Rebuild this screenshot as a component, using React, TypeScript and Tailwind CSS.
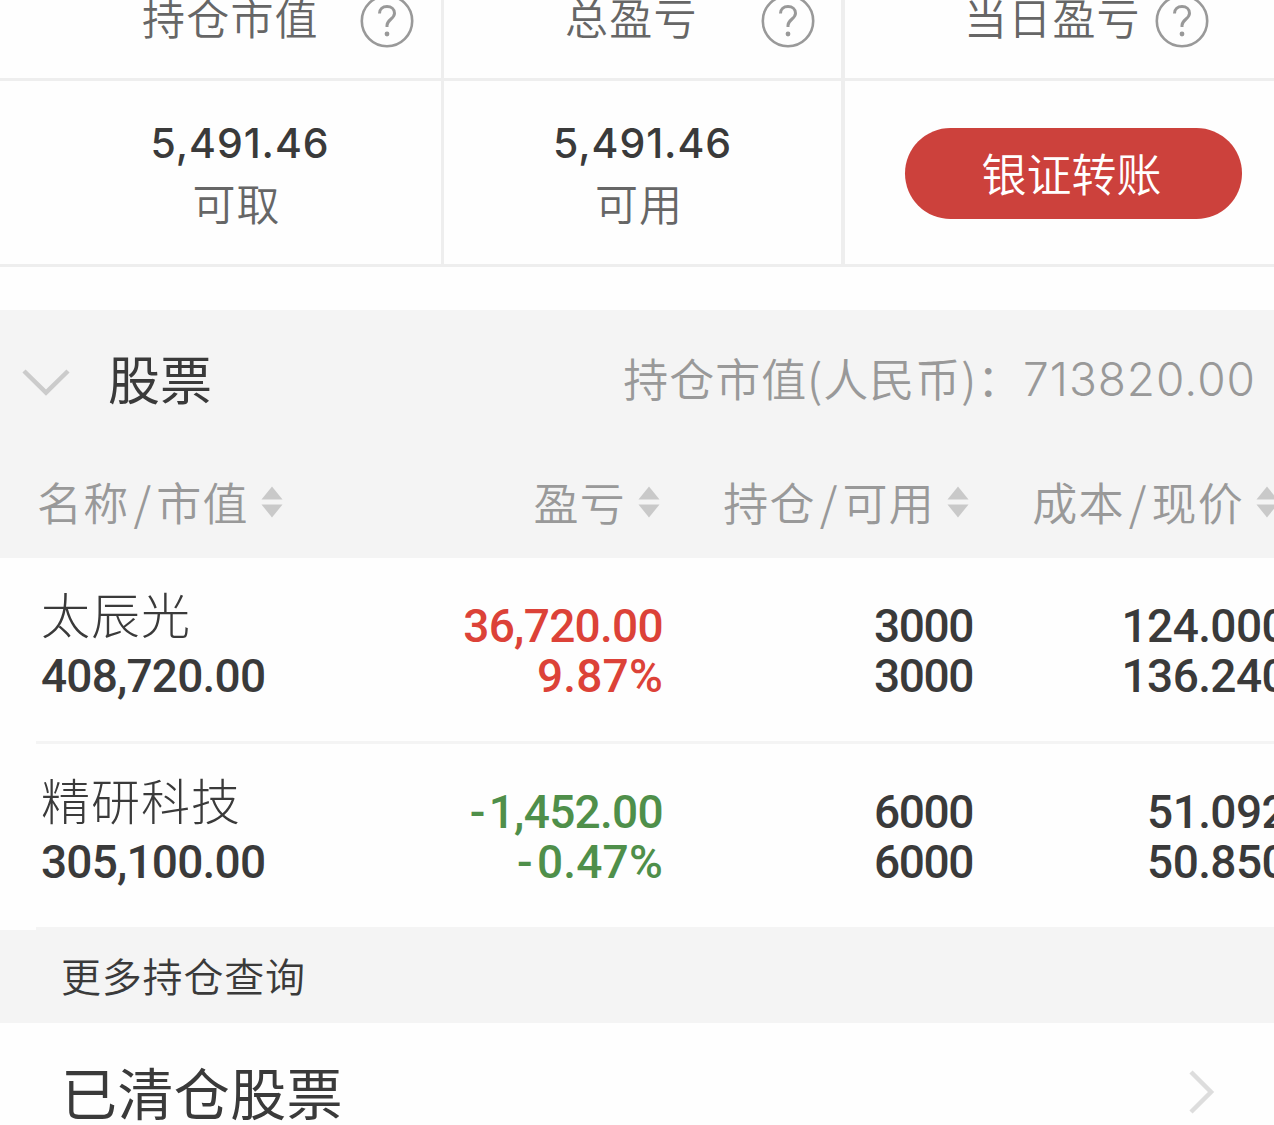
import clsx from "clsx";

const holdings = [
  {
    name: "太辰光",
    value: "408,720.00",
    profit: "36,720.00",
    rate: "9.87%",
    up: true,
    amount: "3000",
    available: "3000",
    cost: "124.000",
    price: "136.240",
  },
  {
    name: "精研科技",
    value: "305,100.00",
    profit: "-1,452.00",
    rate: "-0.47%",
    up: false,
    amount: "6000",
    available: "6000",
    cost: "51.092",
    price: "50.850",
  },
];

function HelpIcon({ className }: { className?: string }) {
  return (
    <svg className={clsx("h-[54px] w-[54px] shrink-0", className)} viewBox="0 0 54 54" fill="none" stroke="#999999">
      <circle cx="27" cy="27" r="25.2" strokeWidth="2.6" />
      <path d="M19.5 19.5c0-4.3 3.2-7 7.5-7s7.5 2.8 7.5 6.7c0 5.8-7.5 6.3-7.5 12.3v1.5" strokeWidth="3" />
      <circle cx="27" cy="40" r="2.4" fill="#999999" stroke="none" />
    </svg>
  );
}

function SortIcon({ className }: { className?: string }) {
  return (
    <svg className={clsx("h-[32px] w-[22px] shrink-0", className)} viewBox="0 0 22 32" fill="#c9c9c9">
      <path d="M11 0.5L21.5 13.5H0.5z" />
      <path d="M11 31.5L21.5 18.5H0.5z" />
    </svg>
  );
}

function ColumnLabel({ first, second }: { first: string; second?: string }) {
  return (
    <div className="flex h-[60px] items-center text-[45px] leading-[60px] font-[350] tracking-[1.2px] whitespace-nowrap text-[#999999]">
      <span>{first}</span>
      {second && (
        <>
          <span className="mx-[4px]">/</span>
          <span>{second}</span>
        </>
      )}
      <SortIcon className="ml-[12px]" />
    </div>
  );
}

function Balance({ amount, label }: { amount: string; label: string }) {
  return (
    <div className="flex flex-col items-center pt-[32px]">
      <span className="font-['Inter'] text-[41px] leading-[60px] font-[450] tracking-[0.9px] text-[#3a3a3a]">{amount}</span>
      <span className="mr-[7px] -mt-[3px] text-[43px] leading-[64px] font-[350] tracking-[1px] text-[#666666]">{label}</span>
    </div>
  );
}

function Figures({ top, bottom, className }: { top: string; bottom: string; className?: string }) {
  return (
    <div className={clsx("flex flex-col items-end pt-[43px] font-['Roboto'] text-[46px] leading-[50px] font-medium", className)}>
      {[top, bottom].map((text, i) => (
        <span key={i} className={clsx(text.endsWith("%") && "tracking-[0.2px]")}>
          {text.startsWith("-") && <span className="mr-[4px]">-</span>}
          {text.replace("-", "")}
        </span>
      ))}
    </div>
  );
}

export default function App() {
  return (
    <div className="h-[1125px] w-[1274px] overflow-hidden bg-[#fefefe] font-['Noto_Sans_CJK_SC',sans-serif] text-[#3a3a3a]">
      {/* Account summary */}
      <div className="grid grid-cols-[444px_401px_429px] border-b-[3px] border-[#eeeeee] text-[43px] font-[350] text-[#666666]">
        <div className="flex h-[81px] justify-between border-r-[3px] border-b-[3px] border-[#eeeeee] pr-[27px] pl-[142px]">
          <span className="-mt-[14px] leading-[60px] tracking-[1.2px]">持仓市值</span>
          <HelpIcon className="-mt-[6px]" />
        </div>
        <div className="flex h-[81px] justify-between border-r-4 border-b-[3px] border-[#eeeeee] pr-[26px] pl-[121px]">
          <span className="-mt-[14px] leading-[60px] tracking-[1.2px]">总盈亏</span>
          <HelpIcon className="-mt-[6px]" />
        </div>
        <div className="flex h-[81px] border-b-[3px] border-[#eeeeee] pl-[119px]">
          <span className="-mt-[14px] leading-[60px] tracking-[1.2px]">当日盈亏</span>
          <HelpIcon className="-mt-[6px] ml-[14px]" />
        </div>
        <div className="h-[183px] border-r-[3px] border-[#eeeeee] pl-[39px]">
          <Balance amount="5,491.46" label="可取" />
        </div>
        <div className="h-[183px] border-r-4 border-[#eeeeee]">
          <Balance amount="5,491.46" label="可用" />
        </div>
        <div className="h-[183px] pt-[47px] pl-[60px]">
          <button className="block h-[91px] w-[337px] rounded-full bg-[#cc413c] pr-[4px] pb-[2px] text-[45px] font-[350] text-white">
            银证转账
          </button>
        </div>
      </div>

      {/* Stock section header */}
      <div className="mt-[43px] h-[248px] bg-[#f4f4f4]">
        <div className="flex h-[140px] items-center pr-[18px] pl-[22px]">
          <svg className="mt-[3px] h-[28px] w-[48px]" viewBox="0 0 48 28" fill="none" stroke="#cbcbcb" strokeWidth="4.5">
            <path d="M2 3l22 21.5L46 3" />
          </svg>
          <span className="ml-[38px] pb-[5px] text-[52px] leading-[70px]">股票</span>
          <div className="ml-auto flex items-center whitespace-nowrap text-[#999999]">
            <span className="pb-[5px] text-[45px] leading-[60px] font-[350] tracking-[1px]">持仓市值(人民币)：</span>
            <span className="-mt-[3px] font-['Inter'] text-[46px] leading-[60px] font-[350] tracking-[1px]">713820.00</span>
          </div>
        </div>
        <div className="grid w-[1278px] grid-cols-[282px_378px_309px_309px] pt-[22px]">
          <div className="pl-[37px]">
            <ColumnLabel first="名称" second="市值" />
          </div>
          <div className="flex justify-end">
            <ColumnLabel first="盈亏" />
          </div>
          <div className="flex justify-end">
            <ColumnLabel first="持仓" second="可用" />
          </div>
          <div className="flex justify-end">
            <ColumnLabel first="成本" second="现价" />
          </div>
        </div>
      </div>

      {holdings.map((item) => (
        <div key={item.name} className="ml-[36px] h-[186px] border-b-[3px] border-[#f4f4f4]">
          <div className="grid w-[1250px] grid-cols-[326px_301px_311px_313px]">
            <div className="flex flex-col pt-[20px] pl-[5px]">
              <span className="text-[49px] leading-[70px] font-light tracking-[1px]">{item.name}</span>
              <span className="mt-[3px] font-['Roboto'] text-[46px] leading-[50px] font-medium tracking-[-0.8px]">
                {item.value}
              </span>
            </div>
            <Figures
              top={item.profit}
              bottom={item.rate}
              className={clsx("tracking-[-0.7px]", item.up ? "text-[#dc4238]" : "text-[#4f8f4a]")}
            />
            <Figures top={item.amount} bottom={item.available} className="pr-[1px] tracking-[-1.4px]" />
            <Figures top={item.cost} bottom={item.price} className="tracking-[-0.6px]" />
          </div>
        </div>
      ))}

      <div className="h-[93px] bg-[#f4f4f4] pl-[61px] text-[40px] leading-[90px] font-[350] tracking-[0.8px]">更多持仓查询</div>

      <div className="flex h-[102px] justify-between pr-[59px] pl-[61px]">
        <span className="pt-[30px] text-[56px] leading-[76px] tracking-[0.4px]">已清仓股票</span>
        <svg className="mt-[47px] h-[44px] w-[27px]" viewBox="0 0 27 44" fill="none" stroke="#dddddd" strokeWidth="4.5">
          <path d="M3 2l20 20L3 42" />
        </svg>
      </div>
    </div>
  );
}
